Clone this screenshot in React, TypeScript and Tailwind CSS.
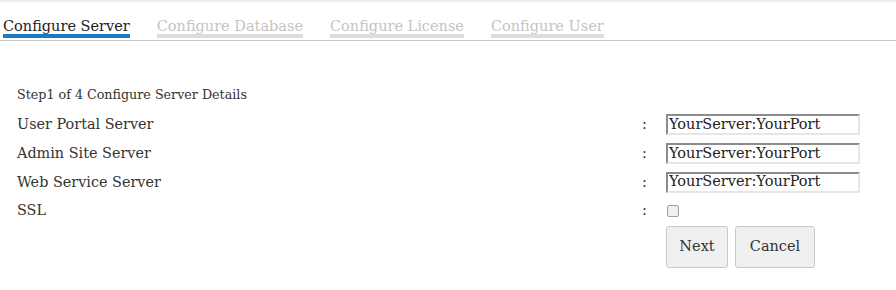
import React from "react";

const tabs = [
  { label: "Configure Server", active: true },
  { label: "Configure Database", active: false },
  { label: "Configure License", active: false },
  { label: "Configure User", active: false },
];

const rows = ["User Portal Server", "Admin Site Server", "Web Service Server"];

export default function App() {
  return (
    <div
      className="w-[896px] h-[290px] bg-white text-[#333] border-t-2 border-[#eeeeee]"
      style={{ fontFamily: '"DejaVu Serif", serif' }}
    >
      <div className="flex gap-[27px] pl-[3px] pt-[16px] border-b border-[#c8c8c8]">
        {tabs.map((t) => (
          <div
            key={t.label}
            className={
              t.active
                ? "text-[14.5px] leading-[16px] border-b-[4px] border-[#1a7ac4] text-[#222] mb-[2px]"
                : "text-[14.5px] leading-[16px] border-b-[4px] border-[#dddddd] text-[#c4c4c4] mb-[2px]"
            }
          >
            {t.label}
          </div>
        ))}
      </div>
      <div className="pl-[17px] pt-[46px]">
        <div className="text-[12.7px] leading-[16px] mb-[7.6px] text-[#333]">Step1 of 4 Configure Server Details</div>
        <div className="grid grid-cols-[625px_24px_1fr] text-[14.4px] text-[#333]">
          {rows.map((r) => (
            <React.Fragment key={r}>
              <div className="h-[28.7px] flex items-center">{r}</div>
              <div className="h-[28.7px] flex items-center">:</div>
              <div className="h-[28.7px] flex items-center">
                <input
                  type="text"
                  defaultValue="YourServer:YourPort"
                  className="w-[194px] h-[21px] px-[1px] text-[14.5px] text-[#222] border-2 border-t-[#8c8c8c] border-l-[#8c8c8c] border-r-[#e6e6e6] border-b-[#e6e6e6] outline-none"
                  style={{ fontFamily: '"DejaVu Serif", serif' }}
                />
              </div>
            </React.Fragment>
          ))}
          <div className="h-[28.7px] flex items-center">SSL</div>
          <div className="h-[28.7px] flex items-center">:</div>
          <div className="h-[28.7px] flex items-center">
            <div className="w-[12px] h-[12px] ml-[1px] rounded-[2px] border border-[#a0a0a0] bg-[#f0f0f0]" />
          </div>
          <div />
          <div />
          <div className="flex gap-[7px] pt-[0.5px]">
            <button className="h-[42.5px] w-[62px] bg-[#f0f0f0] border border-[#c8c8c8] rounded-[3px] text-[14.5px] text-[#333]" style={{ fontFamily: '"DejaVu Serif", serif' }}>
              Next
            </button>
            <button className="h-[42.5px] w-[80px] bg-[#f0f0f0] border border-[#c8c8c8] rounded-[3px] text-[14.5px] text-[#333]" style={{ fontFamily: '"DejaVu Serif", serif' }}>
              Cancel
            </button>
          </div>
        </div>
      </div>
    </div>
  );
}
